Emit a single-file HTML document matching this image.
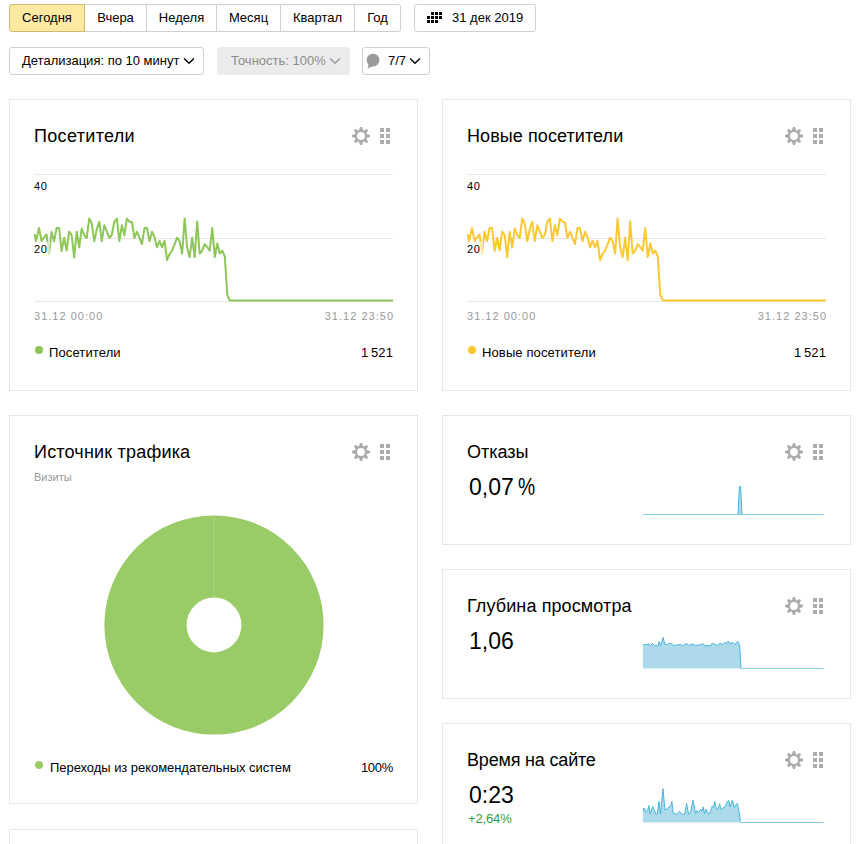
<!DOCTYPE html>
<html><head><meta charset="utf-8">
<style>
*{box-sizing:border-box}
html,body{margin:0;padding:0;background:#fff;width:860px;height:844px;overflow:hidden;position:relative}
body{font-family:"Liberation Sans",sans-serif;color:#000}
.a{position:absolute;white-space:nowrap}
.btn{position:absolute;top:4px;height:28px;border:1px solid #d0d0d0;background:#fff;font-size:13px;line-height:26px;text-align:center;color:#000}
.card{position:absolute;border:1px solid #e6e6e6;background:#fff}
.sq{position:absolute;width:4px;height:4px;background:#acacac}
.ic{position:absolute}
.t18{font-size:18px;line-height:22px}
.ax{font-size:11px;line-height:13px;color:#999;letter-spacing:1.02px}
.lab{font-size:11px;line-height:13px;color:#000;letter-spacing:0.6px}
.leg{font-size:13px;line-height:15px;letter-spacing:0.12px}
.dot{position:absolute;width:8px;height:8px;border-radius:50%}
.gl{position:absolute;height:1px;background:#e6e6e6}
.big{font-size:23px;line-height:26px}
</style></head><body>

<div class="btn" style="left:9px;width:76px;background:#fee9a1;border-color:#cfb972;border-radius:3px 0 0 3px;z-index:2;">Сегодня</div>
<div class="btn" style="left:84px;width:63px;">Вчера</div>
<div class="btn" style="left:146px;width:71px;">Неделя</div>
<div class="btn" style="left:216px;width:65px;">Месяц</div>
<div class="btn" style="left:280px;width:75px;">Квартал</div>
<div class="btn" style="left:354px;width:47px;border-radius:0 3px 3px 0;">Год</div>
<div class="btn" style="left:414px;width:122px;border-radius:3px;text-align:left;padding-left:37px">31 дек 2019</div>
<div style="position:absolute;left:431px;top:12px;width:3px;height:3px;background:#000"></div><div style="position:absolute;left:435px;top:12px;width:3px;height:3px;background:#000"></div><div style="position:absolute;left:439px;top:12px;width:3px;height:3px;background:#000"></div><div style="position:absolute;left:427px;top:16px;width:3px;height:3px;background:#000"></div><div style="position:absolute;left:431px;top:16px;width:3px;height:3px;background:#000"></div><div style="position:absolute;left:435px;top:16px;width:3px;height:3px;background:#000"></div><div style="position:absolute;left:439px;top:16px;width:3px;height:3px;background:#000"></div><div style="position:absolute;left:427px;top:20px;width:3px;height:3px;background:#000"></div><div style="position:absolute;left:431px;top:20px;width:3px;height:3px;background:#000"></div><div style="position:absolute;left:435px;top:20px;width:3px;height:3px;background:#000"></div>
<div class="btn" style="left:9px;top:47px;width:195px;border-radius:3px;text-align:left;padding-left:12px">Детализация: по 10 минут</div>
<svg class="ic" style="left:182.5px;top:57px" width="12" height="8" viewBox="0 0 12 8"><polyline points="1.1,1.5 6,6.3 10.9,1.5" fill="none" stroke="#000" stroke-width="1.35"/></svg>
<div class="btn" style="left:217px;top:47px;width:133px;border-radius:3px;text-align:left;padding-left:13px;background:#ebebeb;border-color:#ebebeb;color:#8c8c8c">Точность: 100%</div>
<svg class="ic" style="left:328.5px;top:57px" width="12" height="8" viewBox="0 0 12 8"><polyline points="1.1,1.5 6,6.3 10.9,1.5" fill="none" stroke="#999" stroke-width="1.35"/></svg>
<div class="btn" style="left:362px;top:47px;width:68px;border-radius:3px;text-align:left;padding-left:25px">7/7</div>
<svg class="ic" style="left:364px;top:51px" width="18" height="20" viewBox="364 51 18 20"><ellipse cx="373" cy="60.0" rx="6.4" ry="6.3" fill="#999"/><polygon points="367.9,68.0 369.3,63.2 374,65.6" fill="#999" stroke="#999" stroke-width="0.6" stroke-linejoin="round"/></svg>
<svg class="ic" style="left:408.5px;top:57px" width="12" height="8" viewBox="0 0 12 8"><polyline points="1.1,1.5 6,6.3 10.9,1.5" fill="none" stroke="#000" stroke-width="1.35"/></svg>
<div class="card" style="left:9px;top:99px;width:409px;height:292px"></div><div class="a t18" style="left:34px;top:125px;letter-spacing:0.33px">Посетители</div><svg class="ic" style="left:351px;top:126px" width="20" height="20" viewBox="351 126 20 20"><g fill="#acacac"><circle cx="361" cy="136" r="5.7"/><polygon points="358.50,131.50 360.00,127.00 362.00,127.00 363.50,131.50"/><polygon points="362.41,131.05 366.66,128.93 368.07,130.34 365.95,134.59"/><polygon points="365.50,133.50 370.00,135.00 370.00,137.00 365.50,138.50"/><polygon points="365.95,137.41 368.07,141.66 366.66,143.07 362.41,140.95"/><polygon points="363.50,140.50 362.00,145.00 360.00,145.00 358.50,140.50"/><polygon points="359.59,140.95 355.34,143.07 353.93,141.66 356.05,137.41"/><polygon points="356.50,138.50 352.00,137.00 352.00,135.00 356.50,133.50"/><polygon points="356.05,134.59 353.93,130.34 355.34,128.93 359.59,131.05"/></g><circle cx="361" cy="136" r="3.9" fill="#fff"/></svg><div class="sq" style="left:380px;top:128px"></div><div class="sq" style="left:386px;top:128px"></div><div class="sq" style="left:380px;top:134px"></div><div class="sq" style="left:386px;top:134px"></div><div class="sq" style="left:380px;top:140px"></div><div class="sq" style="left:386px;top:140px"></div><div class="gl" style="left:34px;top:174px;width:359px"></div><div class="gl" style="left:34px;top:238px;width:359px"></div><div class="gl" style="left:34px;top:301px;width:359px"></div><div class="a lab" style="left:34px;top:180px;background:rgba(255,255,255,0.5)">40</div><svg class="ic" style="left:0;top:0" width="860" height="844"><polyline points="34.60,234.00 36.00,241.00 39.02,228.00 41.53,241.00 44.04,237.50 46.55,234.50 49.06,254.00 51.57,231.70 54.08,241.30 56.59,228.00 59.10,228.00 61.62,251.00 64.13,237.70 66.64,250.50 69.15,231.70 71.66,235.00 74.17,257.30 76.68,231.70 79.19,247.60 81.70,228.50 84.21,235.00 86.72,238.00 89.23,218.50 91.74,223.50 94.25,241.20 96.76,229.20 99.27,221.70 101.78,241.20 104.29,225.30 106.80,231.30 109.31,238.00 111.83,234.90 114.34,221.70 116.85,218.50 119.36,241.20 121.87,225.30 124.38,235.20 126.89,218.50 129.40,221.70 131.91,222.00 134.42,238.00 136.93,231.70 139.44,237.70 141.95,244.10 144.46,228.10 146.97,228.10 149.48,241.20 151.99,231.70 154.50,237.00 157.01,247.30 159.52,240.90 162.03,247.30 164.55,240.90 167.06,260.10 169.57,254.00 172.08,250.50 174.59,244.40 177.10,237.70 179.61,241.20 182.12,253.70 184.63,218.50 187.14,247.60 189.65,257.20 192.16,237.60 194.67,257.10 197.18,221.60 199.69,253.60 202.20,250.60 204.71,244.10 207.22,247.00 209.73,250.60 212.24,228.10 214.76,257.10 217.27,243.50 219.78,253.60 222.29,250.60 224.80,256.50 227.31,295.00 229.82,300.40 232.33,300.40 234.84,300.40 237.35,300.40 239.86,300.40 242.37,300.40 244.88,300.40 247.39,300.40 249.90,300.40 252.41,300.40 254.92,300.40 257.43,300.40 259.94,300.40 262.45,300.40 264.97,300.40 267.48,300.40 269.99,300.40 272.50,300.40 275.01,300.40 277.52,300.40 280.03,300.40 282.54,300.40 285.05,300.40 287.56,300.40 290.07,300.40 292.58,300.40 295.09,300.40 297.60,300.40 300.11,300.40 302.62,300.40 305.13,300.40 307.64,300.40 310.15,300.40 312.66,300.40 315.17,300.40 317.69,300.40 320.20,300.40 322.71,300.40 325.22,300.40 327.73,300.40 330.24,300.40 332.75,300.40 335.26,300.40 337.77,300.40 340.28,300.40 342.79,300.40 345.30,300.40 347.81,300.40 350.32,300.40 352.83,300.40 355.34,300.40 357.85,300.40 360.36,300.40 362.87,300.40 365.38,300.40 367.90,300.40 370.41,300.40 372.92,300.40 375.43,300.40 377.94,300.40 380.45,300.40 382.96,300.40 385.47,300.40 387.98,300.40 390.49,300.40 393.00,300.40" fill="none" stroke="#8cc657" stroke-width="2" stroke-linejoin="round"/></svg><div class="a" style="left:34px;top:242px;width:16px;height:13px;background:rgba(255,255,255,0.6)"></div><div class="a lab" style="left:34px;top:243px">20</div><div class="a ax" style="left:34px;top:310px">31.12 00:00</div><div class="a ax" style="right:465.98px;top:310px">31.12 23:50</div><div class="dot" style="left:35px;top:346px;background:#8cc657"></div><div class="a leg" style="left:49px;top:345px">Посетители</div><div class="a leg" style="right:467px;top:345px">1&#8201;521</div>
<div class="card" style="left:442px;top:99px;width:409px;height:292px"></div><div class="a t18" style="left:467px;top:125px;letter-spacing:0.08px">Новые посетители</div><svg class="ic" style="left:784px;top:126px" width="20" height="20" viewBox="784 126 20 20"><g fill="#acacac"><circle cx="794" cy="136" r="5.7"/><polygon points="791.50,131.50 793.00,127.00 795.00,127.00 796.50,131.50"/><polygon points="795.41,131.05 799.66,128.93 801.07,130.34 798.95,134.59"/><polygon points="798.50,133.50 803.00,135.00 803.00,137.00 798.50,138.50"/><polygon points="798.95,137.41 801.07,141.66 799.66,143.07 795.41,140.95"/><polygon points="796.50,140.50 795.00,145.00 793.00,145.00 791.50,140.50"/><polygon points="792.59,140.95 788.34,143.07 786.93,141.66 789.05,137.41"/><polygon points="789.50,138.50 785.00,137.00 785.00,135.00 789.50,133.50"/><polygon points="789.05,134.59 786.93,130.34 788.34,128.93 792.59,131.05"/></g><circle cx="794" cy="136" r="3.9" fill="#fff"/></svg><div class="sq" style="left:813px;top:128px"></div><div class="sq" style="left:819px;top:128px"></div><div class="sq" style="left:813px;top:134px"></div><div class="sq" style="left:819px;top:134px"></div><div class="sq" style="left:813px;top:140px"></div><div class="sq" style="left:819px;top:140px"></div><div class="gl" style="left:467px;top:174px;width:359px"></div><div class="gl" style="left:467px;top:238px;width:359px"></div><div class="gl" style="left:467px;top:301px;width:359px"></div><div class="a lab" style="left:467px;top:180px;background:rgba(255,255,255,0.5)">40</div><svg class="ic" style="left:0;top:0" width="860" height="844"><polyline points="467.60,234.00 469.00,241.00 472.02,228.00 474.53,241.00 477.04,237.50 479.55,234.50 482.06,254.00 484.57,231.70 487.08,241.30 489.59,228.00 492.10,228.00 494.62,251.00 497.13,237.70 499.64,250.50 502.15,231.70 504.66,235.00 507.17,257.30 509.68,231.70 512.19,247.60 514.70,228.50 517.21,235.00 519.72,238.00 522.23,218.50 524.74,223.50 527.25,241.20 529.76,229.20 532.27,221.70 534.78,241.20 537.29,225.30 539.80,231.30 542.31,238.00 544.83,234.90 547.34,221.70 549.85,218.50 552.36,241.20 554.87,225.30 557.38,235.20 559.89,218.50 562.40,221.70 564.91,222.00 567.42,238.00 569.93,231.70 572.44,237.70 574.95,244.10 577.46,228.10 579.97,228.10 582.48,241.20 584.99,231.70 587.50,237.00 590.01,247.30 592.52,240.90 595.03,247.30 597.55,240.90 600.06,260.10 602.57,254.00 605.08,250.50 607.59,244.40 610.10,237.70 612.61,241.20 615.12,253.70 617.63,218.50 620.14,247.60 622.65,257.20 625.16,237.60 627.67,260.10 630.18,221.60 632.69,253.60 635.20,250.60 637.71,244.10 640.22,247.00 642.73,250.60 645.24,228.10 647.76,257.10 650.27,243.50 652.78,253.60 655.29,250.60 657.80,256.50 660.31,295.00 662.82,300.40 665.33,300.40 667.84,300.40 670.35,300.40 672.86,300.40 675.37,300.40 677.88,300.40 680.39,300.40 682.90,300.40 685.41,300.40 687.92,300.40 690.43,300.40 692.94,300.40 695.45,300.40 697.97,300.40 700.48,300.40 702.99,300.40 705.50,300.40 708.01,300.40 710.52,300.40 713.03,300.40 715.54,300.40 718.05,300.40 720.56,300.40 723.07,300.40 725.58,300.40 728.09,300.40 730.60,300.40 733.11,300.40 735.62,300.40 738.13,300.40 740.64,300.40 743.15,300.40 745.66,300.40 748.17,300.40 750.69,300.40 753.20,300.40 755.71,300.40 758.22,300.40 760.73,300.40 763.24,300.40 765.75,300.40 768.26,300.40 770.77,300.40 773.28,300.40 775.79,300.40 778.30,300.40 780.81,300.40 783.32,300.40 785.83,300.40 788.34,300.40 790.85,300.40 793.36,300.40 795.87,300.40 798.38,300.40 800.90,300.40 803.41,300.40 805.92,300.40 808.43,300.40 810.94,300.40 813.45,300.40 815.96,300.40 818.47,300.40 820.98,300.40 823.49,300.40 826.00,300.40" fill="none" stroke="#fcc832" stroke-width="2" stroke-linejoin="round"/></svg><div class="a" style="left:467px;top:242px;width:16px;height:13px;background:rgba(255,255,255,0.6)"></div><div class="a lab" style="left:467px;top:243px">20</div><div class="a ax" style="left:467px;top:310px">31.12 00:00</div><div class="a ax" style="right:32.98px;top:310px">31.12 23:50</div><div class="dot" style="left:468px;top:346px;background:#fcc832"></div><div class="a leg" style="left:482px;top:345px">Новые посетители</div><div class="a leg" style="right:34px;top:345px">1&#8201;521</div>
<div class="card" style="left:9px;top:415px;width:409px;height:389px"></div>
<div class="a t18" style="left:34px;top:441px;letter-spacing:0.19px">Источник трафика</div>
<svg class="ic" style="left:351px;top:442px" width="20" height="20" viewBox="351 442 20 20"><g fill="#acacac"><circle cx="361" cy="452" r="5.7"/><polygon points="358.50,447.50 360.00,443.00 362.00,443.00 363.50,447.50"/><polygon points="362.41,447.05 366.66,444.93 368.07,446.34 365.95,450.59"/><polygon points="365.50,449.50 370.00,451.00 370.00,453.00 365.50,454.50"/><polygon points="365.95,453.41 368.07,457.66 366.66,459.07 362.41,456.95"/><polygon points="363.50,456.50 362.00,461.00 360.00,461.00 358.50,456.50"/><polygon points="359.59,456.95 355.34,459.07 353.93,457.66 356.05,453.41"/><polygon points="356.50,454.50 352.00,453.00 352.00,451.00 356.50,449.50"/><polygon points="356.05,450.59 353.93,446.34 355.34,444.93 359.59,447.05"/></g><circle cx="361" cy="452" r="3.9" fill="#fff"/></svg><div class="sq" style="left:380px;top:444px"></div><div class="sq" style="left:386px;top:444px"></div><div class="sq" style="left:380px;top:450px"></div><div class="sq" style="left:386px;top:450px"></div><div class="sq" style="left:380px;top:456px"></div><div class="sq" style="left:386px;top:456px"></div>
<div class="a" style="left:34px;top:471px;font-size:11px;line-height:13px;color:#999">Визиты</div>
<svg class="ic" style="left:0;top:0" width="860" height="844"><circle cx="214" cy="625" r="68.5" fill="none" stroke="#99cc66" stroke-width="82.2"/><line x1="214" y1="515.5" x2="214" y2="597" stroke="#b8dc98" stroke-width="0.6"/></svg>
<div class="dot" style="left:35px;top:761px;background:#99cc66"></div>
<div class="a leg" style="left:50px;top:760px;letter-spacing:-0.05px">Переходы из рекомендательных систем</div>
<div class="a leg" style="right:467px;top:760px;letter-spacing:-0.3px">100%</div>
<div class="card" style="left:442px;top:415px;width:409px;height:130px"></div><div class="a t18" style="left:467px;top:441px;letter-spacing:0px">Отказы</div><svg class="ic" style="left:784px;top:442px" width="20" height="20" viewBox="784 442 20 20"><g fill="#acacac"><circle cx="794" cy="452" r="5.7"/><polygon points="791.50,447.50 793.00,443.00 795.00,443.00 796.50,447.50"/><polygon points="795.41,447.05 799.66,444.93 801.07,446.34 798.95,450.59"/><polygon points="798.50,449.50 803.00,451.00 803.00,453.00 798.50,454.50"/><polygon points="798.95,453.41 801.07,457.66 799.66,459.07 795.41,456.95"/><polygon points="796.50,456.50 795.00,461.00 793.00,461.00 791.50,456.50"/><polygon points="792.59,456.95 788.34,459.07 786.93,457.66 789.05,453.41"/><polygon points="789.50,454.50 785.00,453.00 785.00,451.00 789.50,449.50"/><polygon points="789.05,450.59 786.93,446.34 788.34,444.93 792.59,447.05"/></g><circle cx="794" cy="452" r="3.9" fill="#fff"/></svg><div class="sq" style="left:813px;top:444px"></div><div class="sq" style="left:819px;top:444px"></div><div class="sq" style="left:813px;top:450px"></div><div class="sq" style="left:819px;top:450px"></div><div class="sq" style="left:813px;top:456px"></div><div class="sq" style="left:819px;top:456px"></div><div class="a big" style="left:469px;top:474px">0,07<span style='margin-left:4px;display:inline-block;transform:scaleX(0.84);transform-origin:0 0'>%</span></div>
<div class="card" style="left:442px;top:569px;width:409px;height:130px"></div><div class="a t18" style="left:467px;top:595px;letter-spacing:0.11px">Глубина просмотра</div><svg class="ic" style="left:784px;top:596px" width="20" height="20" viewBox="784 596 20 20"><g fill="#acacac"><circle cx="794" cy="606" r="5.7"/><polygon points="791.50,601.50 793.00,597.00 795.00,597.00 796.50,601.50"/><polygon points="795.41,601.05 799.66,598.93 801.07,600.34 798.95,604.59"/><polygon points="798.50,603.50 803.00,605.00 803.00,607.00 798.50,608.50"/><polygon points="798.95,607.41 801.07,611.66 799.66,613.07 795.41,610.95"/><polygon points="796.50,610.50 795.00,615.00 793.00,615.00 791.50,610.50"/><polygon points="792.59,610.95 788.34,613.07 786.93,611.66 789.05,607.41"/><polygon points="789.50,608.50 785.00,607.00 785.00,605.00 789.50,603.50"/><polygon points="789.05,604.59 786.93,600.34 788.34,598.93 792.59,601.05"/></g><circle cx="794" cy="606" r="3.9" fill="#fff"/></svg><div class="sq" style="left:813px;top:598px"></div><div class="sq" style="left:819px;top:598px"></div><div class="sq" style="left:813px;top:604px"></div><div class="sq" style="left:819px;top:604px"></div><div class="sq" style="left:813px;top:610px"></div><div class="sq" style="left:819px;top:610px"></div><div class="a big" style="left:469px;top:628px">1,06</div>
<div class="card" style="left:442px;top:723px;width:409px;height:130px"></div><div class="a t18" style="left:467px;top:749px;letter-spacing:-0.18px">Время на сайте</div><svg class="ic" style="left:784px;top:750px" width="20" height="20" viewBox="784 750 20 20"><g fill="#acacac"><circle cx="794" cy="760" r="5.7"/><polygon points="791.50,755.50 793.00,751.00 795.00,751.00 796.50,755.50"/><polygon points="795.41,755.05 799.66,752.93 801.07,754.34 798.95,758.59"/><polygon points="798.50,757.50 803.00,759.00 803.00,761.00 798.50,762.50"/><polygon points="798.95,761.41 801.07,765.66 799.66,767.07 795.41,764.95"/><polygon points="796.50,764.50 795.00,769.00 793.00,769.00 791.50,764.50"/><polygon points="792.59,764.95 788.34,767.07 786.93,765.66 789.05,761.41"/><polygon points="789.50,762.50 785.00,761.00 785.00,759.00 789.50,757.50"/><polygon points="789.05,758.59 786.93,754.34 788.34,752.93 792.59,755.05"/></g><circle cx="794" cy="760" r="3.9" fill="#fff"/></svg><div class="sq" style="left:813px;top:752px"></div><div class="sq" style="left:819px;top:752px"></div><div class="sq" style="left:813px;top:758px"></div><div class="sq" style="left:819px;top:758px"></div><div class="sq" style="left:813px;top:764px"></div><div class="sq" style="left:819px;top:764px"></div><div class="a big" style="left:469px;top:782px">0:23</div><div class="a" style="left:468px;top:812px;font-size:13px;line-height:14px;color:#2fa040;letter-spacing:-0.15px">+2,64%</div>
<div class="card" style="left:9px;top:829px;width:409px;height:100px"></div>
<svg class="ic" style="left:0;top:0" width="860" height="844"><line x1="643" y1="514.5" x2="823.5" y2="514.5" stroke="#86cde8" stroke-width="1"/><polygon points="738.0,514.5 739.4,486.5 740.6,486.5 742.0,514.5" fill="#acdaea"/><polyline points="738.0,514.5 739.4,486.5 740.6,486.5 742.0,514.5" fill="none" stroke="#4bb6dc" stroke-width="1"/><polygon points="642.9,668.5 642.9,644.4 645.7,644.8 648.9,643.9 650.4,645.7 652.7,643.5 654.6,645.7 657.8,645.7 659.1,641.6 660.8,645.5 663.0,637.4 664.9,644.2 667.4,644.8 668.8,643.5 671.5,643.2 673.8,645.7 676.4,645.2 680.2,644.4 682.8,645.7 686.6,643.3 688.5,645.5 693.0,643.9 695.6,645.7 699.4,644.8 703.2,643.9 705.2,645.7 710.9,645.7 712.2,643.2 714.7,644.4 717.3,645.5 719.9,643.5 723.0,644.4 725.0,642.3 726.3,643.5 728.2,641.0 730.1,643.9 732.7,642.3 734.6,644.4 737.8,641.6 739.7,645.2 741.0,668.5 741.0,668.5" fill="#acdaea"/><polyline points="642.9,644.4 645.7,644.8 648.9,643.9 650.4,645.7 652.7,643.5 654.6,645.7 657.8,645.7 659.1,641.6 660.8,645.5 663.0,637.4 664.9,644.2 667.4,644.8 668.8,643.5 671.5,643.2 673.8,645.7 676.4,645.2 680.2,644.4 682.8,645.7 686.6,643.3 688.5,645.5 693.0,643.9 695.6,645.7 699.4,644.8 703.2,643.9 705.2,645.7 710.9,645.7 712.2,643.2 714.7,644.4 717.3,645.5 719.9,643.5 723.0,644.4 725.0,642.3 726.3,643.5 728.2,641.0 730.1,643.9 732.7,642.3 734.6,644.4 737.8,641.6 739.7,645.2 741.0,668.5" fill="none" stroke="#4bb6dc" stroke-width="1"/><line x1="741" y1="668.5" x2="823.5" y2="668.5" stroke="#86cde8" stroke-width="1"/><polygon points="642.9,822.5 642.9,810.7 643.8,808.1 644.7,808.8 645.7,812.0 647.6,810.7 648.9,805.6 650.2,813.9 652.7,806.6 654.0,809.4 655.9,814.3 657.2,813.5 659.1,801.5 660.4,813.9 663.0,788.7 664.9,810.0 666.8,809.2 668.7,807.1 670.6,806.2 671.9,801.5 673.2,813.5 675.1,813.5 676.4,814.3 679.6,811.3 682.1,814.3 684.7,814.3 686.6,803.4 688.5,813.9 690.4,812.6 693.0,800.2 695.6,813.5 696.8,810.7 698.8,812.6 700.7,809.2 702.0,811.3 703.2,806.9 704.5,813.9 705.8,809.2 707.7,812.6 709.6,814.3 711.9,806.6 713.5,807.5 714.7,801.1 716.3,809.2 718.0,809.2 719.6,803.7 721.1,809.4 723.0,807.9 725.0,806.9 726.9,802.4 728.6,800.5 730.1,806.9 732.4,800.2 734.2,807.5 737.1,803.3 739.0,810.4 740.3,821.6 741.0,822.5 741.0,822.5" fill="#acdaea"/><polyline points="642.9,810.7 643.8,808.1 644.7,808.8 645.7,812.0 647.6,810.7 648.9,805.6 650.2,813.9 652.7,806.6 654.0,809.4 655.9,814.3 657.2,813.5 659.1,801.5 660.4,813.9 663.0,788.7 664.9,810.0 666.8,809.2 668.7,807.1 670.6,806.2 671.9,801.5 673.2,813.5 675.1,813.5 676.4,814.3 679.6,811.3 682.1,814.3 684.7,814.3 686.6,803.4 688.5,813.9 690.4,812.6 693.0,800.2 695.6,813.5 696.8,810.7 698.8,812.6 700.7,809.2 702.0,811.3 703.2,806.9 704.5,813.9 705.8,809.2 707.7,812.6 709.6,814.3 711.9,806.6 713.5,807.5 714.7,801.1 716.3,809.2 718.0,809.2 719.6,803.7 721.1,809.4 723.0,807.9 725.0,806.9 726.9,802.4 728.6,800.5 730.1,806.9 732.4,800.2 734.2,807.5 737.1,803.3 739.0,810.4 740.3,821.6 741.0,822.5" fill="none" stroke="#4bb6dc" stroke-width="1"/><line x1="741" y1="822.5" x2="823.5" y2="822.5" stroke="#86cde8" stroke-width="1"/></svg>
</body></html>
